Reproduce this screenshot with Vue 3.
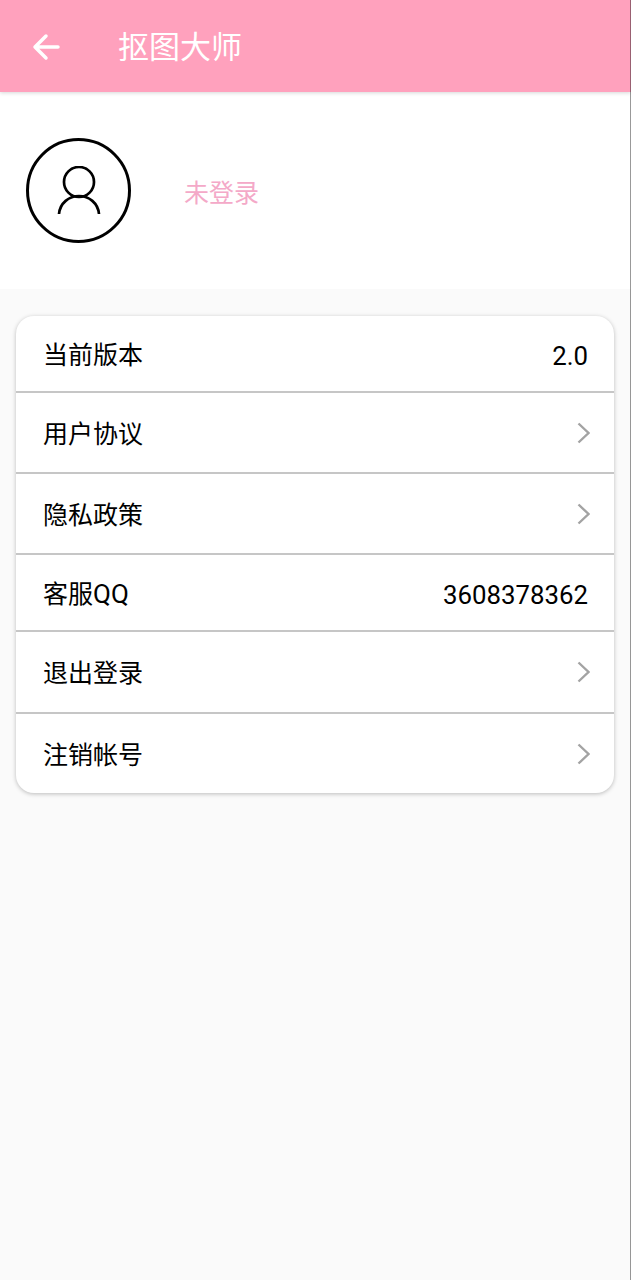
<template>
  <div class="page">
    <header class="topbar">
      <svg class="back" width="30" height="30" viewBox="0 0 30 30" fill="none">
        <path d="M27 15H4M15 4L4 15 15 26" stroke="#fff" stroke-width="3.500" stroke-linecap="round" stroke-linejoin="round" />
      </svg>
      <span class="title">抠图大师</span>
    </header>

    <section class="profile">
      <div class="avatar">
        <svg class="person" width="44" height="50" viewBox="0 0 44 50" fill="none">
          <circle cx="22" cy="16" r="15" stroke="#000" stroke-width="2.700" />
          <path d="M2 48C3 37 12 30 22 30S41 37 42 48" stroke="#000" stroke-width="2.700" />
        </svg>
      </div>
      <span class="login">未登录</span>
    </section>

    <main class="content">
      <div class="card">
        <div v-for="row in rows" :key="row.label" class="row" :class="{ link: row.arrow }">
          <span>{{ row.label }}<span v-if="row.latin" class="latin">{{ row.latin }}</span></span>
          <span v-if="row.value" class="value">{{ row.value }}</span>
          <svg v-if="row.arrow" class="chevron" width="14" height="24" viewBox="0 0 14 24" fill="none">
            <path d="M2.500 2.500L12.500 12 2.500 21.500" stroke="#a3a3a3" stroke-width="2.400" />
          </svg>
        </div>
      </div>
    </main>
  </div>
</template>

<script setup>
const rows = [
  { label: "当前版本", value: "2.0" },
  { label: "用户协议", arrow: true },
  { label: "隐私政策", arrow: true },
  { label: "客服", latin: "QQ", value: "3608378362" },
  { label: "退出登录", arrow: true },
  { label: "注销帐号", arrow: true },
];
</script>

<style>
body {
  background: #fafafa;
}
</style>

<style scoped>
.page {
  position: relative;
  min-height: 1280px;
  background: #fafafa;
  font-family: "Roboto", "Noto Sans CJK SC", sans-serif;
}

/* 右边缘的细线 */
.page::after {
  content: "";
  position: absolute;
  top: 0;
  right: 0;
  bottom: 0;
  width: 1px;
  background: rgba(0, 0, 0, 0.4);
}

.topbar {
  height: 92px;
  display: flex;
  align-items: center;
  gap: 57px;
  padding: 0 0 0 31px;
  background: #ffa1bd;
  box-shadow: 0 1px 4px rgba(0, 0, 0, 0.16);
  position: relative;
}

.back {
  display: block;
  margin-top: 1px;
}

.title {
  font-size: 31px;
  color: #fff;
  margin-top: -3px;
}

.profile {
  height: 197px;
  display: flex;
  align-items: center;
  background: #fff;
  padding-left: 26px;
}

.avatar {
  width: 105px;
  height: 105px;
  box-sizing: border-box;
  border: 3px solid #000;
  border-radius: 50%;
  display: flex;
  align-items: center;
  justify-content: center;
}

.person {
  display: block;
}

.login {
  margin-left: 53px;
  font-size: 25px;
  color: #f4a9c8;
}

.content {
  padding: 27px 17px 0 16px;
}

.card {
  background: #fff;
  border-radius: 18px;
  box-shadow: 0 1px 4px rgba(0, 0, 0, 0.25);
  overflow: hidden;
}

.row {
  box-sizing: border-box;
  height: 77px;
  display: flex;
  align-items: center;
  justify-content: space-between;
  padding: 0 26px 2px 27px;
  font-size: 25px;
  color: #000;
  border-bottom: 2px solid #c6c6c6;
}

.row.link {
  height: 81px;
  padding-right: 24px;
}

.row:nth-child(5) {
  height: 82px;
}

.row:last-child {
  height: 79px;
  border-bottom: none;
}

.latin {
  font-size: 26px;
}

.value {
  font-size: 25.800px;
  margin-top: 6px;
}

.chevron {
  display: block;
  margin-top: 2px;
}
</style>
